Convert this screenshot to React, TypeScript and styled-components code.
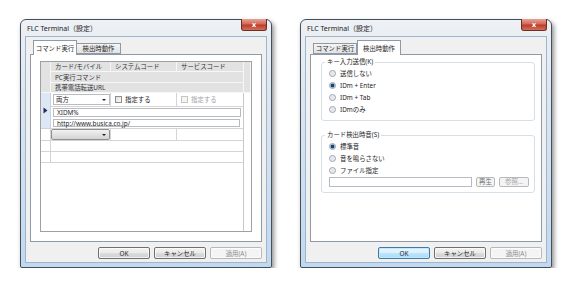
import styled, { createGlobalStyle } from 'styled-components';

const GlobalStyle = createGlobalStyle`
  body {
    margin: 0;
    background: #fff;
    font-family: "Noto Sans", "Noto Sans CJK JP", sans-serif;
    font-size: 6.4px;
    color: #1e1e1e;
  }
`;

const Stage = styled.div`
  display: flex;
  gap: 28px;
  padding: 19px 0 0 20px;
`;

// Vista style window frame
const Window = styled.div`
  width: 252px;
  height: 249px;
  box-sizing: border-box;
  border: 1px solid #46505c;
  border-radius: 6px 6px 2px 2px;
  background: linear-gradient(#eef1f5, #dde6ef 30%, #c1d8ee);
  box-shadow: 2px 3px 5px rgba(0, 0, 0, 0.45);
  display: flex;
  flex-direction: column;
  padding: 0 4px 4px;
`;

const TitleBar = styled.div`
  height: 16px;
  display: flex;
  justify-content: space-between;
`;

const Title = styled.div`
  padding: 4px 0 0 2px;
  font-size: 7px;
  line-height: 9px;
  color: #222;
`;

const CloseButton = styled.div`
  width: 26px;
  height: 12px;
  margin-top: -1px;
  box-sizing: border-box;
  border: 1px solid #6e2d24;
  border-top: none;
  border-radius: 0 0 3px 3px;
  background: linear-gradient(#e6a497, #d06a59 45%, #c03b27 55%, #d0705c);
  color: #fff;
  font-family: "DejaVu Sans", sans-serif;
  font-size: 7px;
  font-weight: bold;
  display: flex;
  align-items: center;
  justify-content: center;
`;

const Client = styled.div`
  flex: 1;
  background: #f0f0f0;
  border: 1px solid #9db6d0;
  display: flex;
  flex-direction: column;
  padding: 3px 4px;
`;

const TabStrip = styled.div`
  height: 14px;
  display: flex;
  align-items: flex-end;
  padding-left: 3px;
`;

const Tab = styled.div<{ $active?: boolean; $w: number }>`
  width: ${p => p.$w}px;
  height: ${p => (p.$active ? 15 : 11)}px;
  margin-bottom: ${p => (p.$active ? -1 : 0)}px;
  box-sizing: border-box;
  border: 1px solid #8e9aa8;
  border-bottom: ${p => (p.$active ? 'none' : '1px solid #8e9aa8')};
  border-left: ${p => (p.$active ? '1px solid #8e9aa8' : 'none')};
  background: ${p => (p.$active ? '#fff' : 'linear-gradient(#f4f4f4, #e3e3e3)')};
  position: relative;
  z-index: ${p => (p.$active ? 1 : 0)};
  display: flex;
  align-items: center;
  justify-content: center;
  white-space: nowrap;
  line-height: 9px;
  &:first-child {
    border-left: 1px solid #8e9aa8;
  }
`;

const Panel = styled.div`
  height: 188px;
  box-sizing: border-box;
  background: #fff;
  border: 1px solid #8e9aa8;
`;

const ButtonRow = styled.div`
  margin-top: 5px;
  display: flex;
  justify-content: flex-end;
  gap: 4px;
`;

const Button = styled.div<{ $disabled?: boolean; $default?: boolean }>`
  width: 52px;
  height: 12px;
  box-sizing: border-box;
  border: 1px solid ${p => (p.$disabled ? '#b5b9bd' : p.$default ? '#3d7bad' : '#707070')};
  border-radius: 2px;
  background: ${p =>
    p.$disabled
      ? '#f4f4f4'
      : p.$default
      ? 'linear-gradient(#eaf6fd, #d9f0fc 50%, #bee6fd 50%, #a7d9f5)'
      : 'linear-gradient(#f2f2f2, #ebebeb 50%, #dddddd 50%, #cfcfcf)'};
  box-shadow: inset 0 0 0 1px ${p => (p.$default ? '#c8e8fa' : 'rgba(255,255,255,0.7)')};
  color: ${p => (p.$disabled ? '#8d8d8d' : '#1e1e1e')};
  display: flex;
  align-items: center;
  justify-content: center;
  line-height: 9px;
`;

/* ---------- command grid (left dialog) ---------- */

const GridBox = styled.div`
  margin: 6px 9px 0;
  height: 171px;
  box-sizing: border-box;
  border: 1px solid #a0a0a0;
  display: grid;
  grid-template-columns: 10px 60px 66px 67px 1fr;
  grid-template-rows: 10px 11px 10px 14px 11px 11px 12px 11px 11px 1fr;
`;

const Cell = styled.div<{ $col: string; $row: string; $kind?: 'head' | 'rowhead' | 'plain' | 'filler' }>`
  grid-column: ${p => p.$col};
  grid-row: ${p => p.$row};
  box-sizing: border-box;
  display: flex;
  align-items: center;
  overflow: hidden;
  white-space: nowrap;
  line-height: 9px;
  ${p =>
    p.$kind === 'head'
      ? `background: #e2e2e2; color: #333; padding-left: 4px;
         border-right: 1px solid #f6f6f6; border-bottom: 1px solid #f6f6f6;`
      : ''}
  ${p =>
    p.$kind === 'rowhead'
      ? `background: #dde7f5; border-right: 1px solid #c9d3df; border-bottom: 1px solid #c9d3df;
         justify-content: center;`
      : ''}
  ${p => (p.$kind === 'plain' ? `border-right: 1px solid #d4d4d4; border-bottom: 1px solid #d4d4d4;` : '')}
  ${p => (p.$kind === 'filler' ? `border-left: 1px solid #c8c8c8; margin-left: -1px;` : '')}
`;

const ComboBox = styled.div<{ $empty?: boolean }>`
  flex: 1;
  align-self: stretch;
  margin: ${p => (p.$empty ? '0' : '1px 0 1px 2px')};
  box-sizing: border-box;
  border: 1px solid ${p => (p.$empty ? '#8f8f8f' : '#b8bcc2')};
  border-radius: ${p => (p.$empty ? '2px' : '0')};
  background: ${p => (p.$empty ? 'linear-gradient(#f3f3f3, #e2e2e2 50%, #d4d4d4)' : '#fff')};
  display: flex;
  align-items: center;
  justify-content: space-between;
  padding: 0 3px 0 2px;
`;

const Caret = styled.span`
  width: 0;
  height: 0;
  border-left: 2px solid transparent;
  border-right: 2px solid transparent;
  border-top: 2px solid #222;
`;

const Check = styled.span<{ $disabled?: boolean }>`
  width: 7px;
  height: 7px;
  box-sizing: border-box;
  margin: 0 3px 0 4px;
  border: 1px solid ${p => (p.$disabled ? '#c5c5c5' : '#8f8f8f')};
  background: ${p => (p.$disabled ? '#f4f4f4' : 'linear-gradient(135deg, #e0e0e0, #fafafa)')};
`;

const CheckLabel = styled.span<{ $disabled?: boolean }>`
  color: ${p => (p.$disabled ? '#a3a3a3' : '#1e1e1e')};
`;

const TextBox = styled.div`
  flex: 1;
  align-self: stretch;
  margin: 1px 3px 1px 2px;
  box-sizing: border-box;
  border: 1px solid #b8bcc2;
  padding-left: 3px;
  display: flex;
  align-items: center;
`;

const Arrow = styled.svg`
  width: 5px;
  height: 7px;
`;

/* ---------- detect options (right dialog) ---------- */

const Options = styled.div`
  padding: 2px 6px 0 10px;
  display: flex;
  flex-direction: column;
  gap: 9px;
`;

const Group = styled.fieldset`
  margin: 0;
  padding: 0 0 5px 7px;
  border: 1px solid #d5dfe5;
  border-radius: 3px;
  display: flex;
  flex-direction: column;
`;

const Legend = styled.legend`
  padding: 0 2px;
  margin-left: -4px;
  line-height: 10px;
`;

const RadioRow = styled.div`
  height: 12px;
  display: flex;
  align-items: center;
  gap: 4px;
  line-height: 9px;
`;

const Radio = styled.span<{ $checked?: boolean }>`
  width: 7px;
  height: 7px;
  box-sizing: border-box;
  border-radius: 50%;
  border: 1px solid #9aa3ad;
  background: ${p =>
    p.$checked
      ? 'radial-gradient(circle, #1f3f6e 0 1.6px, #8fb0d6 2px, #eef2f6 3px)'
      : 'radial-gradient(circle, #e4e8ec 0 1.5px, #f7f7f7 3px)'};
`;

const FileRow = styled.div`
  height: 10px;
  margin-top: 1px;
  display: flex;
  gap: 4px;
  padding-right: 5px;
`;

const FileInput = styled.div`
  width: 143px;
  box-sizing: border-box;
  border: 1px solid #b8bcc2;
  background: #fff;
`;

const SmallButton = styled.div<{ $w: number; $dim?: boolean }>`
  width: ${p => p.$w}px;
  box-sizing: border-box;
  border: 1px solid #b5b9bd;
  border-radius: 2px;
  background: #f4f4f4;
  color: ${p => (p.$dim ? '#a8a8a8' : '#6f6f6f')};
  display: flex;
  align-items: center;
  justify-content: center;
  line-height: 8px;
`;

function Frame({ active, children }: { active: number; children: React.ReactNode }) {
  return (
    <Window>
      <TitleBar>
        <Title>FLC Terminal（設定）</Title>
        <CloseButton>x</CloseButton>
      </TitleBar>
      <Client>
        <TabStrip>
          <Tab $active={active === 0} $w={44}>コマンド実行</Tab>
          <Tab $active={active === 1} $w={44}>検出時動作</Tab>
        </TabStrip>
        <Panel>{children}</Panel>
        <ButtonRow>
          <Button $default={active === 1}>OK</Button>
          <Button>キャンセル</Button>
          <Button $disabled>適用(A)</Button>
        </ButtonRow>
      </Client>
    </Window>
  );
}

export default function App() {
  return (
    <>
      <GlobalStyle />
      <Stage>
        <Frame active={0}>
          <GridBox>
            <Cell $kind="head" $col="1" $row="1 / 4" />
            <Cell $kind="head" $col="2" $row="1">カード/モバイル</Cell>
            <Cell $kind="head" $col="3" $row="1">システムコード</Cell>
            <Cell $kind="head" $col="4" $row="1">サービスコード</Cell>
            <Cell $kind="head" $col="2 / 5" $row="2">PC実行コマンド</Cell>
            <Cell $kind="head" $col="2 / 5" $row="3">携帯電話転送URL</Cell>
            <Cell $kind="head" $col="5" $row="1 / 4" />

            <Cell $kind="rowhead" $col="1" $row="4 / 7">
              <Arrow viewBox="0 0 5 7">
                <path d="M0.5 0.5 L4.5 3.5 L0.5 6.5 Z" fill="#1b2f57" />
              </Arrow>
            </Cell>
            <Cell $kind="plain" $col="2" $row="4">
              <ComboBox>
                <span>両方</span>
                <Caret />
              </ComboBox>
            </Cell>
            <Cell $kind="plain" $col="3" $row="4">
              <Check />
              <CheckLabel>指定する</CheckLabel>
            </Cell>
            <Cell $kind="plain" $col="4" $row="4">
              <Check $disabled />
              <CheckLabel $disabled>指定する</CheckLabel>
            </Cell>
            <Cell $col="2 / 5" $row="5">
              <TextBox>XIDM%</TextBox>
            </Cell>
            <Cell $kind="plain" $col="2 / 5" $row="6">
              <TextBox>http://www.busica.co.jp/</TextBox>
            </Cell>

            <Cell $kind="plain" $col="1" $row="7" />
            <Cell $kind="plain" $col="2" $row="7">
              <ComboBox $empty>
                <span />
                <Caret />
              </ComboBox>
            </Cell>
            <Cell $kind="plain" $col="3" $row="7" />
            <Cell $kind="plain" $col="4" $row="7" />
            <Cell $kind="plain" $col="1" $row="8" />
            <Cell $kind="plain" $col="2 / 5" $row="8" />
            <Cell $kind="plain" $col="1" $row="9" />
            <Cell $kind="plain" $col="2 / 5" $row="9" />
            <Cell $kind="filler" $col="5" $row="4 / 11" />
          </GridBox>
        </Frame>

        <Frame active={1}>
          <Options>
            <Group>
              <Legend>キー入力送信(K)</Legend>
              <RadioRow><Radio />送信しない</RadioRow>
              <RadioRow><Radio $checked />IDm + Enter</RadioRow>
              <RadioRow><Radio />IDm + Tab</RadioRow>
              <RadioRow><Radio />IDmのみ</RadioRow>
            </Group>
            <Group>
              <Legend>カード検出時音(S)</Legend>
              <RadioRow><Radio $checked />標準音</RadioRow>
              <RadioRow><Radio />音を鳴らさない</RadioRow>
              <RadioRow><Radio />ファイル指定</RadioRow>
              <FileRow>
                <FileInput />
                <SmallButton $w={19}>再生</SmallButton>
                <SmallButton $w={30} $dim>参照...</SmallButton>
              </FileRow>
            </Group>
          </Options>
        </Frame>
      </Stage>
    </>
  );
}
